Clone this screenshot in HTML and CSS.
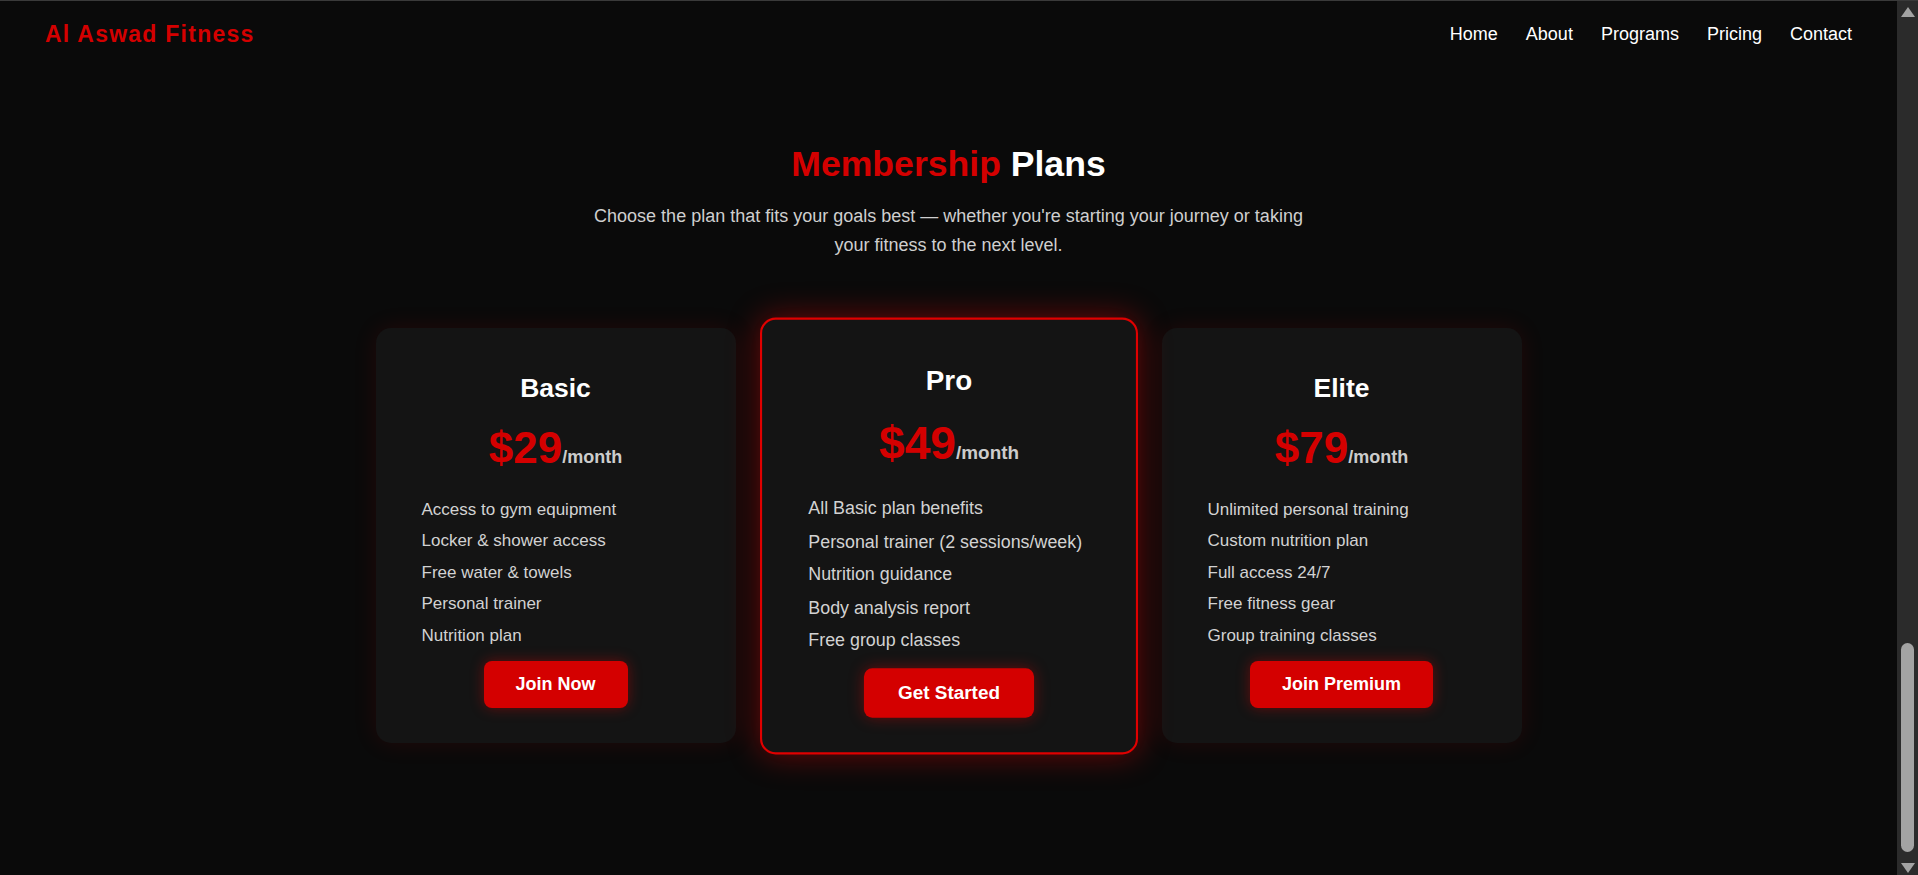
FILE: index.html
```html
<!DOCTYPE html>
<html lang="en">
<head>
<meta charset="utf-8">
<title>Al Aswad Fitness — Membership Plans</title>
<link rel="stylesheet" href="styles.css">
</head>
<body>
  <div class="page">
    <header class="navbar">
      <div class="logo">Al Aswad Fitness</div>
      <nav>
        <ul class="nav-links">
          <li><a href="#">Home</a></li>
          <li><a href="#">About</a></li>
          <li><a href="#">Programs</a></li>
          <li><a href="#">Pricing</a></li>
          <li><a href="#">Contact</a></li>
        </ul>
      </nav>
    </header>

    <section class="pricing">
      <h2 class="section-title"><span class="accent">Membership</span> Plans</h2>
      <p class="section-sub">Choose the plan that fits your goals best — whether you're starting your journey or taking your fitness to the next level.</p>

      <div class="plans">
        <div class="plan">
          <h3 class="plan-name">Basic</h3>
          <p class="plan-price">$29<span class="per">/month</span></p>
          <ul class="features">
            <li>Access to gym equipment</li>
            <li>Locker &amp; shower access</li>
            <li>Free water &amp; towels</li>
            <li>Personal trainer</li>
            <li>Nutrition plan</li>
          </ul>
          <a class="btn" href="#">Join Now</a>
        </div>

        <div class="plan featured">
          <h3 class="plan-name">Pro</h3>
          <p class="plan-price">$49<span class="per">/month</span></p>
          <ul class="features">
            <li>All Basic plan benefits</li>
            <li>Personal trainer (2 sessions/week)</li>
            <li>Nutrition guidance</li>
            <li>Body analysis report</li>
            <li>Free group classes</li>
          </ul>
          <a class="btn" href="#">Get Started</a>
        </div>

        <div class="plan">
          <h3 class="plan-name">Elite</h3>
          <p class="plan-price">$79<span class="per">/month</span></p>
          <ul class="features">
            <li>Unlimited personal training</li>
            <li>Custom nutrition plan</li>
            <li>Full access 24/7</li>
            <li>Free fitness gear</li>
            <li>Group training classes</li>
          </ul>
          <a class="btn" href="#">Join Premium</a>
        </div>
      </div>
    </section>
  </div>

  <div class="scrollbar" aria-hidden="true">
    <span class="sb-arrow sb-up"></span>
    <div class="sb-track"><span class="sb-thumb"></span></div>
    <span class="sb-arrow sb-down"></span>
  </div>
</body>
</html>
```

FILE: styles.css
```css
* {
  box-sizing: border-box;
}

html {
  background: #0a0a0a;
}

body {
  margin: 0;
  height: 100vh;
  overflow: hidden;
  display: flex;
  background: #0a0a0a;
  color: #fff;
  font-family: "Liberation Sans", Arial, sans-serif;
  border-top: 1px solid #3a3a3a;
}

.page {
  flex: 1;
  min-width: 0;
  overflow: hidden;
}

/* Navbar */
.navbar {
  display: flex;
  align-items: center;
  justify-content: space-between;
  padding: 20px 45px 19px 45px;
  background: #0a0a0a;
}

.logo {
  font-size: 23px;
  font-weight: 700;
  letter-spacing: 1.25px;
  color: #d40000;
}

.nav-links {
  display: flex;
  gap: 28px;
  list-style: none;
  margin: 0;
  padding: 0;
}

.nav-links a {
  color: #fff;
  text-decoration: none;
  font-size: 18px;
}

/* Pricing */
.pricing {
  padding: 77px 20px 0;
  text-align: center;
}

.section-title {
  margin: 0;
  font-size: 35.6px;
  font-weight: 700;
  color: #fff;
}

.accent {
  color: #d40000;
}

.section-sub {
  max-width: 720px;
  margin: 17px auto 0;
  font-size: 18px;
  line-height: 28.8px;
  color: #cfcfcf;
}

.plans {
  display: flex;
  justify-content: center;
  gap: 33px;
  margin-top: 68px;
}

.plan {
  width: 360px;
  padding: 38px 30px 33px;
  background: #141414;
  border: 2px solid transparent;
  border-radius: 15px;
  box-shadow: 0 0 25px rgba(255, 0, 0, 0.1);
  text-align: center;
}

.plan.featured {
  border-color: #e00000;
  transform: scale(1.05);
  box-shadow: 0 0 30px rgba(255, 0, 0, 0.4);
}

.plan-name {
  margin: 5px 0 0;
  font-size: 26.5px;
  font-weight: 700;
  color: #fff;
}

.plan-price {
  margin: 19px 0 0;
  font-size: 44px;
  font-weight: 700;
  color: #d40000;
}

.per {
  font-size: 18px;
  color: #cccccc;
}

.features {
  list-style: none;
  margin: 21px 0 10px;
  padding: 0 14px;
  text-align: left;
}

.features li {
  line-height: 31.5px;
  font-size: 17px;
  color: #d2d2d2;
}

.btn {
  display: block;
  width: fit-content;
  margin: 0 auto;
  padding: 13px 32px;
  background: #d40000;
  color: #fff;
  font-size: 18px;
  font-weight: 700;
  text-decoration: none;
  border-radius: 8px;
  box-shadow: 0 0 14px rgba(255, 0, 0, 0.35);
}

/* Window scrollbar (page is scrolled to the bottom) */
.scrollbar {
  flex: 0 0 21px;
  display: flex;
  flex-direction: column;
  align-items: center;
  background: #2b2b2b;
}

.sb-arrow {
  width: 0;
  height: 0;
  border-left: 7px solid transparent;
  border-right: 7px solid transparent;
}

.sb-up {
  margin-top: 6px;
  border-bottom: 10px solid #a3a3a3;
}

.sb-down {
  margin: 0 0 2px;
  border-top: 10px solid #a3a3a3;
}

.sb-track {
  flex: 1;
  display: flex;
  flex-direction: column;
  justify-content: flex-end;
  padding-bottom: 11px;
}

.sb-thumb {
  display: block;
  width: 13px;
  height: 209px;
  border-radius: 7px;
  background: #a3a3a3;
}
```
